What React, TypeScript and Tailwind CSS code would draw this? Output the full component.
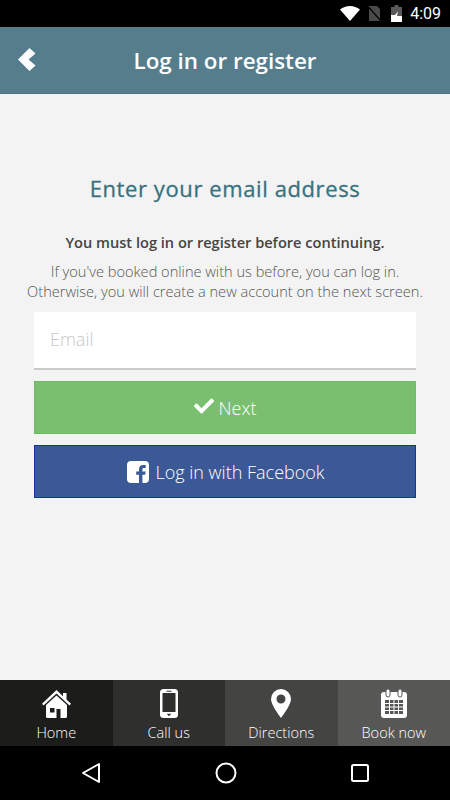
import { FaCheck } from "react-icons/fa";

function BackIcon() {
  return (
    <svg width="18" height="23" viewBox="0 0 18 23" className="absolute left-[18px] top-[21px]">
      <path d="M11.5 0L17.5 5.5L10.5 11.5L17.5 17.5L11.5 23L0 11.5z" fill="#fff" />
    </svg>
  );
}

function FacebookIcon() {
  return (
    <svg width="22" height="22" viewBox="0 0 22 22">
      <path
        d="M4 0h14a4 4 0 0 1 4 4v14a4 4 0 0 1-4 4h-2.6v-8.3h2.8l.4-3.2h-3.2V8.4c0-.9.3-1.5 1.6-1.5h1.7V4c-.3 0-1.3-.1-2.5-.1-2.5 0-4.2 1.5-4.2 4.3v2.3H9.2v3.2H12V22H4a4 4 0 0 1-4-4V4a4 4 0 0 1 4-4z"
        fill="#fff"
      />
    </svg>
  );
}

function HomeIcon() {
  return (
    <svg width="29" height="28" viewBox="0 0 29 28">
      <path d="M14.5 0L21 6.2V3h3.5v6.5L29 13.8l-1.5 1.7L14.5 3.4 1.5 15.5 0 13.8z" fill="#fff" />
      <path
        d="M14.5 5.5L25 15v11.5a1.5 1.5 0 0 1-1.5 1.5H18.5V19h-4v9H5.5A1.5 1.5 0 0 1 4 26.5V15z"
        fill="#fff"
        fillRule="evenodd"
      />
      <rect x="8" y="18" width="4.5" height="4.5" fill="#1c1c1b" />
    </svg>
  );
}

function PhoneIcon() {
  return (
    <svg width="18" height="29" viewBox="0 0 18 29">
      <rect x="0" y="0" width="18" height="29" rx="3.5" fill="#fff" />
      <rect x="2.5" y="4" width="13" height="19" fill="#2f2f2e" />
      <rect x="6.5" y="1.7" width="5" height="1" fill="#2f2f2e" />
      <path d="M6.8 24.8h4.4L9 27.2z" fill="#2f2f2e" />
    </svg>
  );
}

function MarkerIcon() {
  return (
    <svg width="20" height="29" viewBox="0 0 20 29">
      <path
        d="M10 0a10 10 0 0 1 10 10c0 5-6.5 14.5-10 19C6.5 24.5 0 15 0 10A10 10 0 0 1 10 0zm0 5.5a4.5 4.5 0 1 0 0 9 4.5 4.5 0 0 0 0-9z"
        fill="#fff"
        fillRule="evenodd"
      />
    </svg>
  );
}

function CalendarIcon() {
  return (
    <svg width="26" height="29" viewBox="0 0 26 29">
      <rect x="0" y="3" width="26" height="26" rx="3" fill="#fff" />
      <rect x="4" y="11" width="18" height="14" fill="#575756" />
      {/* lignes blanches de la grille */}
      <path d="M4 14.500h18M4 18h18M4 21.500h18M8.500 11v14M13 11v14M17.500 11v14" stroke="#fff" strokeWidth="1" />
      <rect x="5" y="0" width="4" height="8" rx="2" fill="#fff" stroke="#575756" strokeWidth="1" />
      <rect x="17" y="0" width="4" height="8" rx="2" fill="#fff" stroke="#575756" strokeWidth="1" />
    </svg>
  );
}

function StatusIcons() {
  return (
    <div className="flex items-center">
      <svg width="20" height="15" viewBox="0 0 20 15" className="mr-[8px]">
        <path d="M0 3.5C3 1.2 6.3 0 10 0s7 1.2 10 3.5L10 15z" fill="#fff" />
      </svg>
      <svg width="13" height="15" viewBox="0 0 13 15" className="mr-[10px]">
        <path d="M1 0h8l3 3v12H1z" fill="#4a4a4a" />
        <path d="M0 0.5L13 15" stroke="#000" strokeWidth="1.2" />
      </svg>
      <svg width="11" height="17" viewBox="0 0 11 17" className="mr-[8px]">
        <path d="M3.5 0h4v2H11v15H0V2h3.5z" fill="#5a5a5a" />
        <path d="M0 10h4L7 6.5 6 11h5v6H0z" fill="#fff" />
      </svg>
      <span className="text-[16px] leading-none text-white font-['Roboto',sans-serif]">4:09</span>
    </div>
  );
}

const tabs = [
  { label: "Home", bg: "bg-[#1c1c1b]", icon: <HomeIcon /> },
  { label: "Call us", bg: "bg-[#2f2f2e]", icon: <PhoneIcon /> },
  { label: "Directions", bg: "bg-[#444443]", icon: <MarkerIcon /> },
  { label: "Book now", bg: "bg-[#575756]", icon: <CalendarIcon /> },
];

export default function App() {
  return (
    <div className="flex h-[800px] w-[450px] flex-col overflow-hidden bg-[#f3f3f3] font-['Open_Sans',sans-serif]">
      <div className="flex h-[27px] items-center justify-end bg-black pr-[9px]">
        <StatusIcons />
      </div>

      <header className="relative flex h-[67px] items-center justify-center border-b border-[#4d7280] bg-[#567d8b] pt-[2px]">
        <BackIcon />
        <h1 className="text-[22.4px] font-semibold leading-none text-white">Log in or register</h1>
      </header>

      <main className="flex flex-1 flex-col items-center px-[34px] pt-[79px]">
        <h2 className="whitespace-nowrap text-[22px] font-normal leading-[30px] tracking-[0.6px] text-[#38727f] [-webkit-text-stroke:0.3px_#38727f]">
          Enter your email address
        </h2>
        <p className="mt-[29px] whitespace-nowrap text-[14.6px] font-semibold leading-[20px] text-[#444]">
          You must log in or register before continuing.
        </p>
        <p className="mt-[9px] whitespace-nowrap text-center text-[14.6px] font-light leading-[20px] text-[#555]">
          If you've booked online with us before, you can log in.
          <br />
          Otherwise, you will create a new account on the next screen.
        </p>

        <div className="mt-[11px] flex h-[58px] w-full items-center border-b-2 border-[#cbcbcb] bg-white pb-[2px] pl-[16px]">
          <span className="text-[18px] font-light text-[#c8c8c8]">Email</span>
        </div>

        <button className="mt-[11px] flex h-[53px] w-full items-center justify-center gap-[5px] border border-[#6dbd63] bg-[#79bf6f] text-[18px] font-light text-white">
          <FaCheck size={20} className="-mt-[4px]" />
          <span className="mt-[2px]">Next</span>
        </button>

        <button className="mt-[11px] flex h-[53px] w-full items-center justify-center gap-[6px] border border-[#133a8f] bg-[#3b5897] pl-[2px] text-[18px] font-light text-white">
          <FacebookIcon />
          <span className="mt-[2px]">Log in with Facebook</span>
        </button>
      </main>

      <nav className="grid h-[66px] grid-cols-4">
        {tabs.map((tab) => (
          <div key={tab.label} className={`flex flex-col items-center pt-[9px] ${tab.bg}`}>
            <div className="flex h-[29px] items-center justify-center">{tab.icon}</div>
            <span className="mt-[6px] text-[14.5px] font-light leading-[18px] text-white">{tab.label}</span>
          </div>
        ))}
      </nav>

      <div className="flex h-[54px] items-center bg-black">
        <div className="flex w-full items-center justify-between pl-[81px] pr-[80px]">
          <svg width="20" height="22" viewBox="0 0 20 22">
            <path d="M18 2v18L2 11z" fill="none" stroke="#fff" strokeWidth="2" strokeLinejoin="round" />
          </svg>
          <svg width="22" height="22" viewBox="0 0 22 22">
            <circle cx="11" cy="11" r="9.5" fill="none" stroke="#fff" strokeWidth="2" />
          </svg>
          <svg width="20" height="20" viewBox="0 0 20 20">
            <rect x="2" y="2" width="16" height="16" rx="1.5" fill="none" stroke="#fff" strokeWidth="2" />
          </svg>
        </div>
      </div>
    </div>
  );
}
